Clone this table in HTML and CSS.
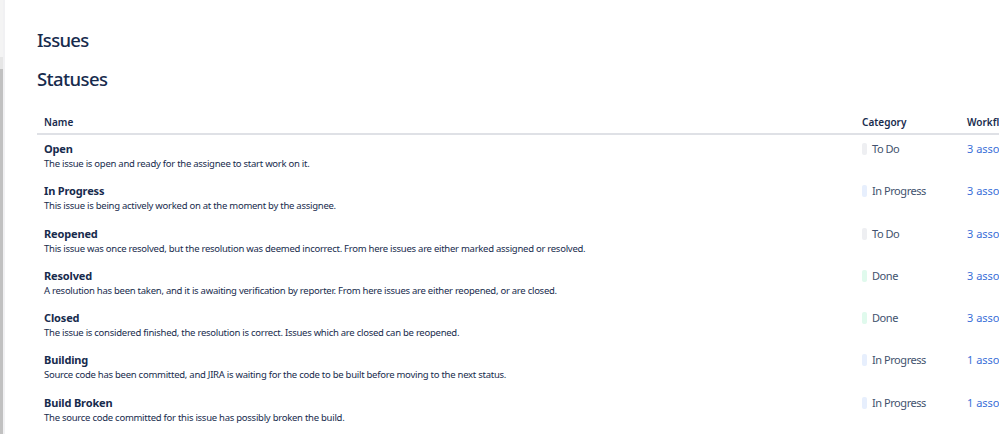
FILE: index.html
```html
<!DOCTYPE html>
<html>
<head>
<meta charset="utf-8">
<link rel="stylesheet" href="styles.css">
</head>
<body>
<div class="frame">
  <div class="rail"><div class="rail-top"></div><div class="rail-mid"></div><div class="rail-bottom"></div></div>
  <main class="content">
    <h1 class="page-title">Issues</h1>
    <h2 class="section-title">Statuses</h2>
    <table class="statuses">
      <thead>
        <tr><th class="c-name">Name</th><th class="c-cat">Category</th><th class="c-wf">Workflows</th></tr>
      </thead>
      <tbody>
        <tr><td class="c-name"><div class="st-name">Open</div><div class="st-desc">The issue is open and ready for the assignee to start work on it.</div></td><td class="c-cat"><span class="loz loz-todo"></span>To Do</td><td class="c-wf"><a class="wf">3 associated workflows</a></td></tr>
        <tr><td class="c-name"><div class="st-name">In Progress</div><div class="st-desc">This issue is being actively worked on at the moment by the assignee.</div></td><td class="c-cat"><span class="loz loz-prog"></span>In Progress</td><td class="c-wf"><a class="wf">3 associated workflows</a></td></tr>
        <tr><td class="c-name"><div class="st-name">Reopened</div><div class="st-desc">This issue was once resolved, but the resolution was deemed incorrect. From here issues are either marked assigned or resolved.</div></td><td class="c-cat"><span class="loz loz-todo"></span>To Do</td><td class="c-wf"><a class="wf">3 associated workflows</a></td></tr>
        <tr><td class="c-name"><div class="st-name">Resolved</div><div class="st-desc">A resolution has been taken, and it is awaiting verification by reporter. From here issues are either reopened, or are closed.</div></td><td class="c-cat"><span class="loz loz-done"></span>Done</td><td class="c-wf"><a class="wf">3 associated workflows</a></td></tr>
        <tr><td class="c-name"><div class="st-name">Closed</div><div class="st-desc">The issue is considered finished, the resolution is correct. Issues which are closed can be reopened.</div></td><td class="c-cat"><span class="loz loz-done"></span>Done</td><td class="c-wf"><a class="wf">3 associated workflows</a></td></tr>
        <tr><td class="c-name"><div class="st-name">Building</div><div class="st-desc">Source code has been committed, and JIRA is waiting for the code to be built before moving to the next status.</div></td><td class="c-cat"><span class="loz loz-prog"></span>In Progress</td><td class="c-wf"><a class="wf">1 associated workflow</a></td></tr>
        <tr><td class="c-name"><div class="st-name">Build Broken</div><div class="st-desc">The source code committed for this issue has possibly broken the build.</div></td><td class="c-cat"><span class="loz loz-prog"></span>In Progress</td><td class="c-wf"><a class="wf">1 associated workflow</a></td></tr>
      </tbody>
    </table>
  </main>
</div>
</body>
</html>
```
FILE: styles.css
```css
html, body {
  margin: 0;
  padding: 0;
  background: #ffffff;
  overflow: hidden;
}
body {
  font-family: "Noto Sans", "Open Sans", sans-serif;
  color: #172b4d;
}
.frame {
  display: flex;
  width: 999px;
  height: 434px;
  overflow: hidden;
}
.rail {
  flex: 0 0 3px;
  display: flex;
  flex-direction: column;
  border-right: 2px solid #f1f1f3;
}
.rail-top { height: 57px; background: #f4f4f4; }
.rail-mid { height: 12px; background: #e6e6e6; }
.rail-bottom { flex: 1; background: #c1c1c1; }
.content {
  flex: 1;
  padding-left: 32px;
  min-width: 0;
}
.page-title {
  margin: 27px 0 0 0;
  font-size: 18.5px;
  font-weight: 500;
  letter-spacing: -0.7px;
  line-height: 26px;
  color: #172b4d;
}
.section-title {
  margin: 13px 0 0 0;
  font-size: 18.5px;
  font-weight: 500;
  letter-spacing: -0.6px;
  line-height: 26px;
  color: #172b4d;
}
.statuses {
  margin-top: 23px;
  width: 1137px;
  border-collapse: collapse;
  table-layout: fixed;
}
.statuses th {
  text-align: left;
  font-size: 10px;
  font-weight: 600;
  color: #172b4d;
  padding: 0 7px 4px 7px;
  line-height: 14px;
  border-bottom: 2px solid #dfe1e6;
}
.statuses td {
  vertical-align: top;
  padding: 6px 7px 0 7px;
  height: 36.3px;
}
.c-name { width: 804px; }
.c-cat { width: 91px; }
.c-wf { width: 200px; }
.st-name {
  font-size: 11px;
  font-weight: 700;
  letter-spacing: -0.15px;
  line-height: 15px;
  color: #172b4d;
}
.st-desc {
  margin-top: 1px;
  font-size: 9.5px;
  letter-spacing: -0.26px;
  line-height: 14px;
  color: #172b4d;
  white-space: nowrap;
}
td.c-cat {
  font-size: 11px;
  letter-spacing: -0.45px;
  line-height: 15px;
  color: #42526e;
  white-space: nowrap;
}
.loz {
  display: inline-block;
  width: 5px;
  height: 12px;
  border-radius: 2px;
  vertical-align: -2px;
  margin-right: 5px;
}
.loz-todo { background: #eeeff2; }
.loz-prog { background: #e7effd; }
.loz-done { background: #e0faed; }
td.c-wf {
  font-size: 11px;
  line-height: 15px;
  white-space: nowrap;
}
.wf {
  color: #3a6fd8;
  text-decoration: none;
}
```
